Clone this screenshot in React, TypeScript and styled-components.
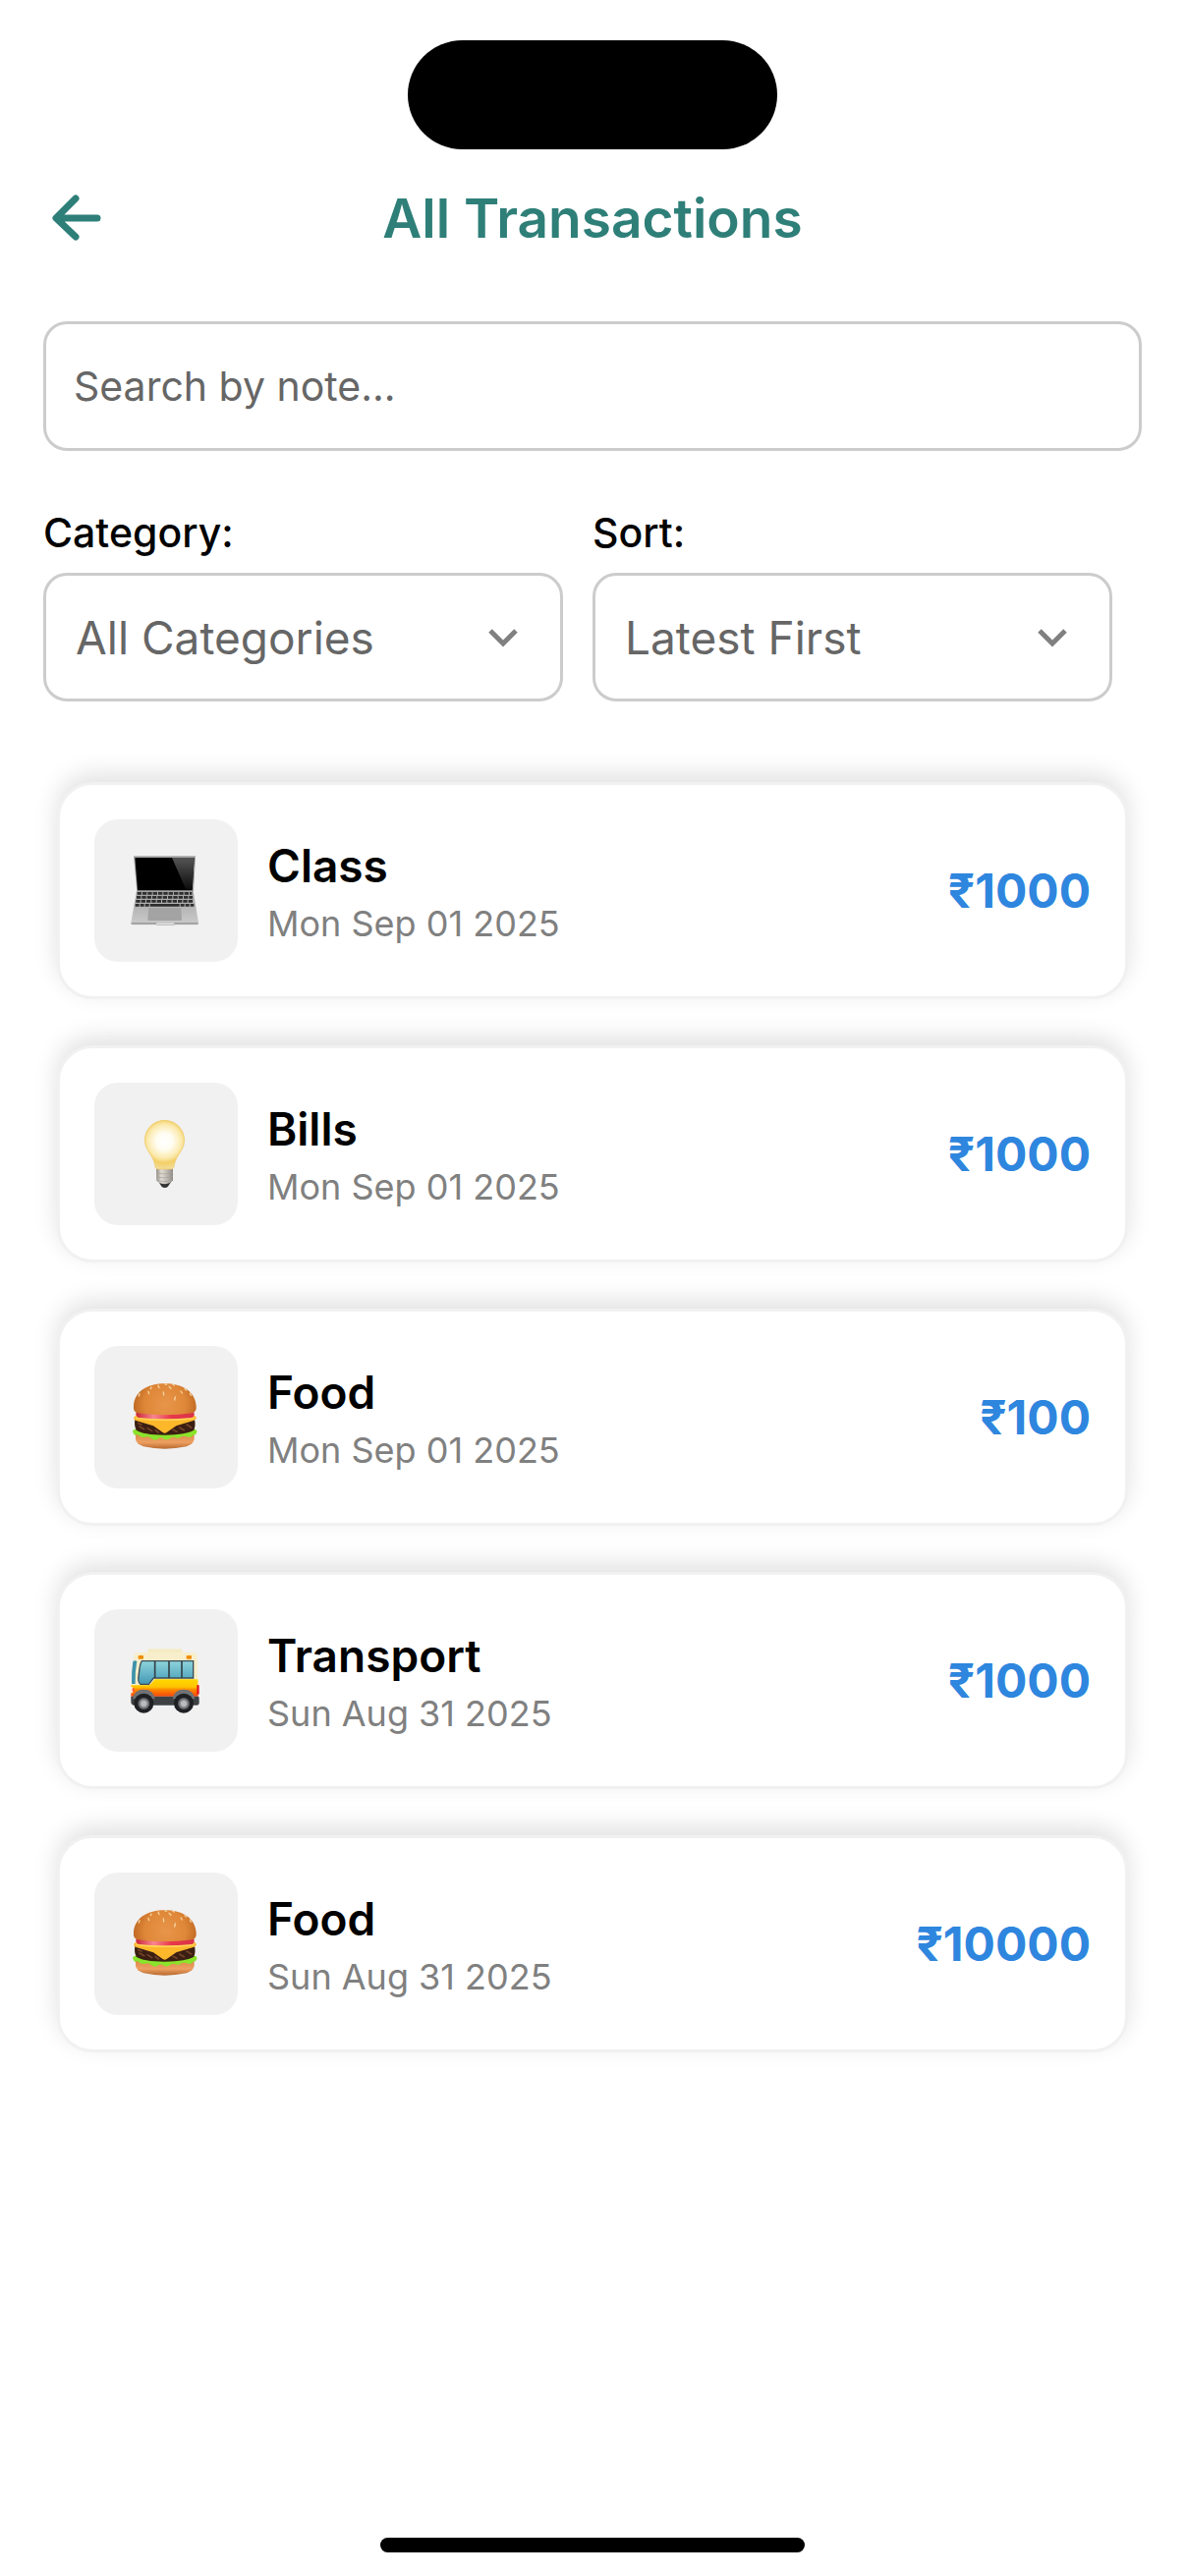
import React, { useState } from "react";
import styled, { createGlobalStyle } from "styled-components";

const GlobalStyle = createGlobalStyle`
  *, *::before, *::after { box-sizing: border-box; }
  body {
    margin: 0;
    background: #fff;
    color: #000;
    font-family: Inter, "Liberation Sans", sans-serif;
  }
  button, input, select { font: inherit; }
`;

const Screen = styled.main`
  display: flex;
  flex-direction: column;
  min-height: 100vh;
  padding: 41px 44px 24px;
`;

const Island = styled.div`
  align-self: center;
  width: 376px;
  height: 111px;
  border-radius: 56px;
  background: #000;
`;

const Header = styled.header`
  display: grid;
  grid-template-columns: 1fr auto 1fr;
  align-items: center;
  height: 140px;
  margin-bottom: 35px;
`;

const BackButton = styled.button`
  display: flex;
  justify-self: start;
  padding: 0;
  border: 0;
  background: none;
  color: #2f7f79;
  cursor: pointer;
`;

const Title = styled.h1`
  margin: 0;
  color: #2f7f79;
  font-size: 55px;
  font-weight: 600;
  line-height: 70px;
`;

const SearchInput = styled.input`
  width: 100%;
  height: 132px;
  padding: 0 28px;
  border: 3px solid #ccc;
  border-radius: 24px;
  background: #fff;
  color: #000;
  font-size: 41px;
  outline: none;

  &::placeholder {
    color: #666;
    opacity: 1;
  }
`;

const Filters = styled.div`
  display: grid;
  grid-template-columns: 1fr 1fr;
  gap: 30px;
  margin-top: 58px;
  padding-right: 30px;
`;

const Field = styled.div`
  display: flex;
  flex-direction: column;
  gap: 16px;
`;

const FieldLabel = styled.label`
  font-size: 41px;
  font-weight: 500;
  line-height: 50px;
`;

const SelectBox = styled.div`
  position: relative;
`;

const Select = styled.select`
  display: block;
  width: 100%;
  height: 131px;
  padding: 0 90px 0 30px;
  border: 3px solid #ccc;
  border-radius: 24px;
  background: #fff;
  color: #666;
  font-size: 46px;
  appearance: none;
`;

const Chevron = styled.svg`
  position: absolute;
  top: 50%;
  right: 45px;
  transform: translateY(-50%);
  pointer-events: none;
`;

const List = styled.ul`
  display: flex;
  flex-direction: column;
  gap: 47px;
  margin: 82px 0 0;
  padding: 0 14px;
  list-style: none;
`;

const Card = styled.li`
  display: flex;
  align-items: center;
  gap: 30px;
  padding: 35px;
  border: 3px solid #f1f1f1;
  border-radius: 36px;
  background: #fff;
  box-shadow: 0 -8px 24px rgba(0, 0, 0, 0.12);
`;

const Tile = styled.div`
  flex: none;
  width: 146px;
  height: 145px;
  border-radius: 24px;
  background: #f1f1f1;
`;

const Art = styled.svg`
  display: block;
  width: 100%;
  height: 100%;
`;

const Details = styled.div`
  display: flex;
  flex: 1;
  flex-direction: column;
  gap: 8px;
  min-width: 0;
`;

const Name = styled.h2`
  margin: 0;
  font-size: 46px;
  font-weight: 600;
  line-height: 58px;
`;

const DateText = styled.time`
  color: #808080;
  font-size: 36px;
  line-height: 44px;
`;

const Amount = styled.span`
  color: #2e86de;
  font-size: 48px;
  font-weight: 700;
  line-height: 58px;
`;

const HomeBar = styled.div`
  align-self: center;
  width: 432px;
  height: 15px;
  margin-top: auto;
  border-radius: 8px;
  background: #000;
`;

const ART_BOX = "18 26 438 435";

function Laptop() {
  const keyRows = [252, 264, 276, 288];
  return (
    <Art viewBox={ART_BOX} aria-hidden="true">
      <defs>
        <linearGradient id="lapDeck" x1="0" y1="0" x2="0" y2="1">
          <stop offset="0" stopColor="#a2a2a2" />
          <stop offset="1" stopColor="#cbcbcb" />
        </linearGradient>
        <linearGradient id="lapShine" x1="0" y1="0" x2="0" y2="1">
          <stop offset="0" stopColor="#555" />
          <stop offset="1" stopColor="#0c0c0c" />
        </linearGradient>
      </defs>
      <path d="M138 138H327L321 246H148Z" fill="#a3a3a3" />
      <path d="M142 143H323L317 243H150Z" fill="#000" />
      <path d="M255 143H323L317 239H297Z" fill="url(#lapShine)" />
      <path d="M147 245H320L336 342Q336 348 330 348H135Q129 348 130 342Z" fill="url(#lapDeck)" />
      {keyRows.map((y, i) => (
        <path
          key={y}
          d={`M${149 - i * 2} ${y}H${316 + i * 2}`}
          stroke="#2e2e2e"
          strokeWidth="8"
          strokeDasharray={i === 3 ? "12 3 12 3 12 3 90 3" : "13 3"}
        />
      ))}
      <path d="M184 296H283L285 335H181Z" fill="#a3a3a3" />
      <path d="M131 344H206L210 347H260L264 344H335" stroke="#989898" strokeWidth="4" fill="none" />
      <path d="M207 346H262" stroke="#e4e4e4" strokeWidth="4" />
    </Art>
  );
}

function Bulb() {
  return (
    <Art viewBox={ART_BOX} aria-hidden="true">
      <defs>
        <radialGradient id="bulbGlow" cx="232" cy="205" r="84" gradientUnits="userSpaceOnUse">
          <stop offset="0" stopColor="#fff" />
          <stop offset="0.3" stopColor="#fffdf2" />
          <stop offset="0.62" stopColor="#fbe9ac" />
          <stop offset="0.78" stopColor="#f3cf66" />
          <stop offset="1" stopColor="#f3dc95" />
        </radialGradient>
        <linearGradient id="bulbBase" x1="0" y1="0" x2="1" y2="0">
          <stop offset="0" stopColor="#8f8a82" />
          <stop offset="0.3" stopColor="#e0dbd2" />
          <stop offset="0.65" stopColor="#bdb8b0" />
          <stop offset="1" stopColor="#8d8984" />
        </linearGradient>
      </defs>
      <path d="M215 330H252L242 344Q233 350 224 344Z" fill="#333" />
      <path d="M207 288H258V324Q252 334 233 336Q213 334 208 324Z" fill="url(#bulbBase)" />
      <path d="M208 302Q232 308 258 300M208 314Q232 320 258 312M210 326Q232 331 256 324" stroke="#a5a19a" strokeWidth="2" fill="none" />
      <path
        d="M232 141C199 141 172 168 172 202C172 233 198 247 203 277Q204 290 212 290H253Q261 290 262 277C267 247 293 233 293 202C293 168 266 141 232 141Z"
        fill="url(#bulbGlow)"
        stroke="#edc968"
        strokeWidth="2"
      />
    </Art>
  );
}

function Burger() {
  return (
    <Art viewBox={ART_BOX} aria-hidden="true">
      <defs>
        <radialGradient id="bunTop" cx="235" cy="205" r="105" gradientUnits="userSpaceOnUse">
          <stop offset="0" stopColor="#e8954a" />
          <stop offset="0.6" stopColor="#df8738" />
          <stop offset="1" stopColor="#b9641f" />
        </radialGradient>
        <linearGradient id="bunBottom" x1="0" y1="0" x2="0" y2="1">
          <stop offset="0" stopColor="#d98645" />
          <stop offset="0.6" stopColor="#eda062" />
          <stop offset="1" stopColor="#b8682e" />
        </linearGradient>
        <linearGradient id="tomato" x1="0" y1="0" x2="1" y2="0">
          <stop offset="0" stopColor="#c92436" />
          <stop offset="0.3" stopColor="#f98590" />
          <stop offset="0.6" stopColor="#e8384c" />
          <stop offset="1" stopColor="#d93447" />
        </linearGradient>
      </defs>
      <path d="M144 290H323V311Q321 325 300 333Q266 340 233 340Q200 340 168 333Q146 325 144 311Z" fill="url(#bunBottom)" />
      <path
        d="M135 288Q136 279 146 280H320Q333 279 331 289Q330 297 320 298Q312 308 300 303Q290 300 284 303Q274 311 264 305Q254 303 248 309Q238 316 228 309Q218 302 211 311Q201 317 192 308Q184 301 174 304Q161 308 154 299Q149 295 143 299Q138 296 135 288Z"
        fill="#8be32b"
      />
      <path d="M142 250H324Q328 268 322 283Q300 296 233 298Q166 297 146 283Q139 268 142 250Z" fill="#3b1e12" />
      <path d="M156 272L170 280M180 277L194 286M204 283L214 290M258 282L270 288M278 275L292 283M300 266L314 275M152 262L162 266" stroke="#74432b" strokeWidth="5" strokeLinecap="round" />
      <path d="M142 240H326Q334 247 323 253L268 270L239 290Q233 295 227 290L198 270L145 254Q134 249 142 240Z" fill="#fdb72b" />
      <path d="M145 246Q233 257 323 246" stroke="#ffd458" strokeWidth="5" fill="none" />
      <path d="M146 228H322Q327 242 315 245Q233 253 153 245Q142 241 146 228Z" fill="url(#tomato)" />
      <path
        d="M138 209C140 165 181 141 233 141C287 141 326 165 329 209Q331 227 317 231Q276 237 233 237Q190 237 150 231Q136 227 138 209Z"
        fill="url(#bunTop)"
      />
      <path d="M213 146L216 154M246 150L252 156M192 152L190 157M183 165L185 172M156 172L154 179M229 167L230 176M265 182L263 191M282 164L286 170M294 157L299 161M310 170L313 177M234 143L239 143M258 144L262 146" stroke="#f4d3a1" strokeWidth="4" strokeLinecap="round" />
    </Art>
  );
}

function Bus() {
  return (
    <Art viewBox={ART_BOX} aria-hidden="true">
      <defs>
        <linearGradient id="busBody" x1="0" y1="0" x2="0" y2="1">
          <stop offset="0" stopColor="#ffd800" />
          <stop offset="0.45" stopColor="#ffc400" />
          <stop offset="0.6" stopColor="#ff8a00" />
          <stop offset="1" stopColor="#f4460b" />
        </linearGradient>
        <linearGradient id="busGlass" x1="0" y1="0" x2="0" y2="1">
          <stop offset="0" stopColor="#8ed4dc" />
          <stop offset="1" stopColor="#4399b5" />
        </linearGradient>
        <radialGradient id="busHub">
          <stop offset="0" stopColor="#d8d8da" />
          <stop offset="0.55" stopColor="#8f9194" />
          <stop offset="1" stopColor="#55575a" />
        </radialGradient>
      </defs>
      <path d="M181 150Q181 147 185 147H282Q287 147 287 152V164H181Z" fill="#f4ebc6" />
      <path d="M140 168Q141 158 152 158H318Q332 158 332 174L335 262H131Q133 210 140 168Z" fill="#f7eecb" />
      <path d="M136 185Q143 181 148 185Q142 216 143 254H132Q131 216 136 185Z" fill="#3f93ab" />
      <rect x="152" y="167" width="16" height="11" rx="3" fill="#f08c00" />
      <rect x="299" y="167" width="16" height="11" rx="3" fill="#f08c00" />
      <path d="M130 258H183Q191 257 195 249L203 240H334L335 292H130Z" fill="url(#busBody)" />
      <path d="M163 184H320V236H199L184 255H159Q149 250 154 224Q157 192 163 184Z" fill="url(#busGlass)" stroke="#3d4d55" strokeWidth="4" />
      <path d="M203 184V236M246 184V236M285 184V236" stroke="#35434b" strokeWidth="5" />
      <rect x="127" y="263" width="9" height="19" rx="4" fill="#ffe9de" />
      <rect x="134" y="266" width="6" height="11" rx="3" fill="#ff5a3a" />
      <rect x="331" y="257" width="7" height="29" rx="3" fill="#e8141c" />
      <path d="M130 292H336Q338 292 338 298V313Q337 319 331 319H138Q130 318 130 308Z" fill="#3e4144" />
      {[169, 291].map((cx) => (
        <g key={cx}>
          <path d={`M${cx - 34} 300Q${cx - 30} 271 ${cx} 271Q${cx + 30} 271 ${cx + 34} 300Z`} fill="#707275" />
          <circle cx={cx} cy="313" r="30" fill="#1f2022" />
          <circle cx={cx} cy="314" r="18" fill="url(#busHub)" />
          <circle cx={cx} cy="314" r="9" fill="#b9bbbd" />
        </g>
      ))}
    </Art>
  );
}

const ART = { Class: Laptop, Bills: Bulb, Food: Burger, Transport: Bus };

type Category = keyof typeof ART;

interface Transaction {
  id: number;
  category: Category;
  date: string;
  amount: number;
}

const TRANSACTIONS: Transaction[] = [
  { id: 1, category: "Class", date: "Mon Sep 01 2025", amount: 1000 },
  { id: 2, category: "Bills", date: "Mon Sep 01 2025", amount: 1000 },
  { id: 3, category: "Food", date: "Mon Sep 01 2025", amount: 100 },
  { id: 4, category: "Transport", date: "Sun Aug 31 2025", amount: 1000 },
  { id: 5, category: "Food", date: "Sun Aug 31 2025", amount: 10000 },
];

interface DropDownProps {
  id: string;
  label: string;
  options: string[];
  value: string;
  onChange: (value: string) => void;
}

function DropDown({ id, label, options, value, onChange }: DropDownProps) {
  return (
    <Field>
      <FieldLabel htmlFor={id}>{label}</FieldLabel>
      <SelectBox>
        <Select id={id} value={value} onChange={(e) => onChange(e.target.value)}>
          {options.map((option) => (
            <option key={option}>{option}</option>
          ))}
        </Select>
        <Chevron width="32" height="20" viewBox="0 0 32 20" aria-hidden="true">
          <path d="M3 3L16 16L29 3" fill="none" stroke="#808080" strokeWidth="5" />
        </Chevron>
      </SelectBox>
    </Field>
  );
}

export default function App() {
  const [query, setQuery] = useState("");
  const [category, setCategory] = useState("All Categories");
  const [sort, setSort] = useState("Latest First");

  const shown = TRANSACTIONS.filter(
    (t) =>
      (category === "All Categories" || t.category === category) &&
      t.category.toLowerCase().includes(query.toLowerCase())
  );
  if (sort === "Oldest First") shown.reverse();

  return (
    <>
      <GlobalStyle />
      <Screen>
        <Island />
        <Header>
          <BackButton aria-label="Back">
            <svg width="70" height="70" viewBox="0 0 70 70" aria-hidden="true">
              <path
                d="M55 35H14M33 15L13 35L33 54"
                fill="none"
                stroke="currentColor"
                strokeWidth="7"
                strokeLinecap="round"
                strokeLinejoin="round"
              />
            </svg>
          </BackButton>
          <Title>All Transactions</Title>
        </Header>
        <SearchInput
          type="text"
          aria-label="Search by note"
          placeholder="Search by note..."
          value={query}
          onChange={(e) => setQuery(e.target.value)}
        />
        <Filters>
          <DropDown
            id="category"
            label="Category:"
            options={["All Categories", "Class", "Bills", "Food", "Transport"]}
            value={category}
            onChange={setCategory}
          />
          <DropDown
            id="sort"
            label="Sort:"
            options={["Latest First", "Oldest First"]}
            value={sort}
            onChange={setSort}
          />
        </Filters>
        <List>
          {shown.map((t) => {
            const Picture = ART[t.category];
            return (
              <Card key={t.id}>
                <Tile>
                  <Picture />
                </Tile>
                <Details>
                  <Name>{t.category}</Name>
                  <DateText>{t.date}</DateText>
                </Details>
                <Amount>₹{t.amount}</Amount>
              </Card>
            );
          })}
        </List>
        <HomeBar />
      </Screen>
    </>
  );
}
